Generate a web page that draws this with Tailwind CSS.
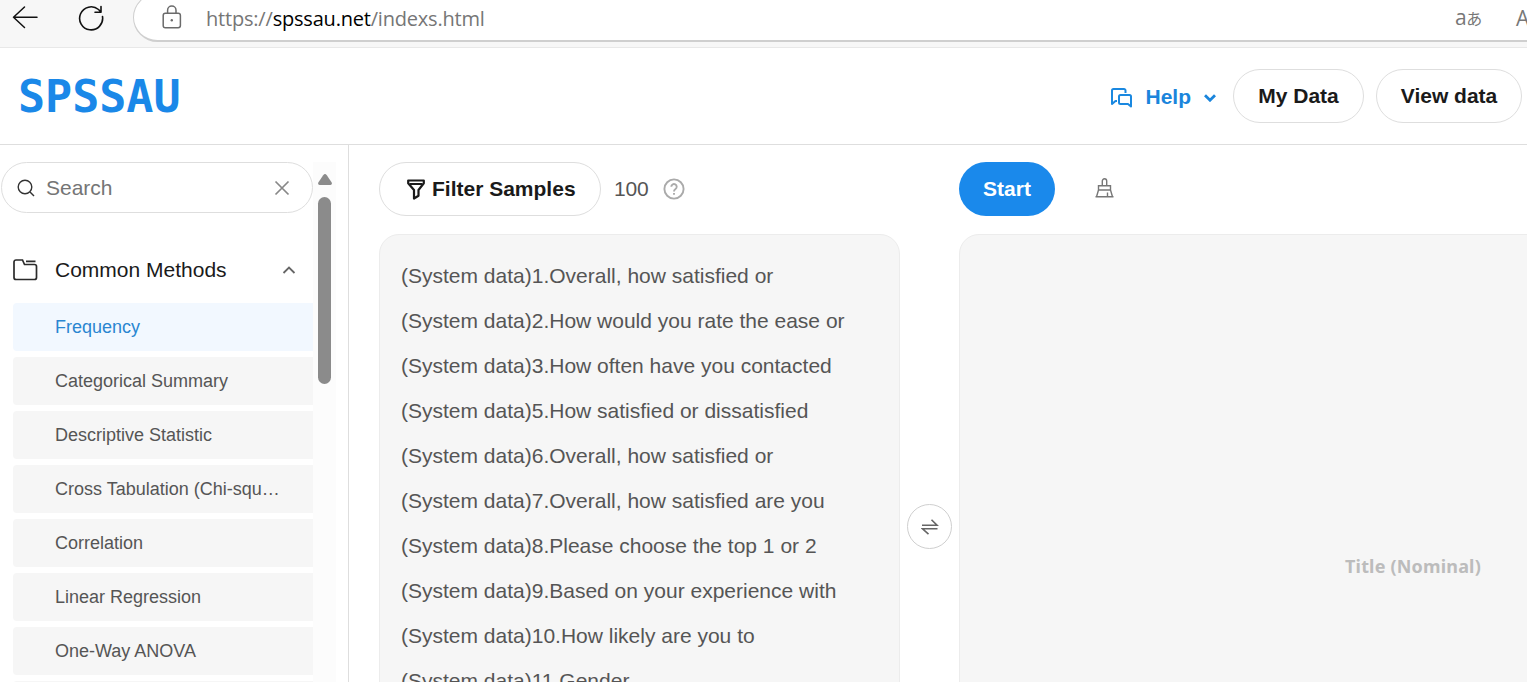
<!DOCTYPE html>
<html lang="en">
  <head>
    <meta charset="UTF-8" />
    <meta name="viewport" content="width=device-width, initial-scale=1.0" />
    <script src="https://cdn.jsdelivr.net/npm/@tailwindcss/browser@4"></script>
    <title>SPSSAU</title>
  </head>
  <body class="h-[682px] overflow-hidden bg-white font-['Liberation_Sans',Arial,sans-serif] text-[21px] text-[#1a1a1a] flex flex-col">
    <!-- Browser bar -->
    <div class="h-12 shrink-0 flex overflow-hidden bg-[#f7f7f7] border-b border-[#e8e8e8] font-['Open_Sans',sans-serif]">
      <div class="w-[133px] shrink-0 flex pl-3 pt-[5px]">
        <svg class="w-[26px] h-6" viewBox="0 0 26 24" fill="none" stroke="#111" stroke-width="1.5" stroke-linecap="round" stroke-linejoin="round">
          <path d="M25 12.3H1.5M12.5 2L1.5 12.3l11 10.2" />
        </svg>
        <svg class="w-[26px] h-[26px] ml-10" viewBox="0 0 26 26" fill="none" stroke="#111" stroke-width="1.6" stroke-linecap="round" stroke-linejoin="round">
          <path d="M24.5 11.5A11.5 11.5 0 1 1 20.5 4.5L23 7M23 1.5V7.3H17" />
        </svg>
      </div>
      <div class="h-[49px] -mt-[7px] w-[1420px] shrink-0 flex items-center bg-white border border-[#cfcfcf] border-b-2 rounded-l-full">
        <svg class="w-5 h-6 ml-[28px] shrink-0" viewBox="0 0 20 24" fill="none" stroke="#6b6b6b" stroke-width="1.5">
          <rect x="1.2" y="8.2" width="17.2" height="14.6" rx="2.2" />
          <path d="M5.6 8V5.3a4.2 4.2 0 0 1 8.4 0V8" />
          <circle cx="9.8" cy="15.2" r="1.2" fill="#6b6b6b" stroke="none" />
        </svg>
        <span class="ml-6 pt-[3px] w-[1249px] shrink-0 whitespace-nowrap text-[20px] tracking-[-0.2px] text-[#767676]">https://<span class="text-black">spssau.net</span>/indexs.html</span>
        <span class="w-[61px] shrink-0 whitespace-nowrap text-[21px] leading-6 text-[#777] tracking-[-0.5px]">a<span class="text-[16px] font-['Noto_Sans_CJK_JP',sans-serif]">あ</span></span>
        <span class="pt-[3px] text-[21px] text-[#777]">A</span>
      </div>
    </div>

    <!-- Header -->
    <header class="h-[97px] shrink-0 flex items-center justify-between pl-[18px] pr-[5px] border-b border-[#dedede]">
      <div class="pt-px font-['DejaVu_Sans_Mono',monospace] font-bold text-[45px] leading-none text-[#1a88e8]">SPSSAU</div>
      <div class="flex items-center font-bold">
        <svg class="w-[22px] h-5 mr-[13px] mt-[3px]" viewBox="0 0 22 20" fill="none" stroke="#1a88e0" stroke-width="2" stroke-linejoin="round">
          <path d="M15.5 5V2.5A1.5 1.500 0 0 0 14 1H3.500A1.500 1.500 0 0 0 2 2.500V16l3.500-3H7" />
          <path d="M10.500 7H19.500A1.500 1.500 0 0 1 21 8.500V18.500l-3-2.500h-7.500A1.500 1.500 0 0 1 9 14.500V8.500A1.500 1.500 0 0 1 10.500 7z" />
        </svg>
        <span class="pt-px text-[#1a85dc]">Help</span>
        <svg class="w-3 h-2 ml-[13px] mr-[17px] mt-[3px]" viewBox="0 0 12 8" fill="none" stroke="#1a85dc" stroke-width="2.8"><path d="M1 1.200l5 5 5-5" /></svg>
        <button class="w-[131px] h-[54px] mr-3 border border-[#dedede] rounded-full">My Data</button>
        <button class="w-[146px] h-[54px] border border-[#dedede] rounded-full">View data</button>
      </div>
    </header>

    <main class="flex-1 min-h-0 flex overflow-hidden">
      <!-- Methods -->
      <aside class="w-[349px] shrink-0 flex pt-[17px] border-r border-[#dedede] overflow-hidden">
        <div class="w-[313px] shrink-0">
          <div class="ml-px w-[312px] h-[51px] flex items-center pl-[15px] pr-[22px] border border-[#dedede] rounded-full">
            <svg class="w-[18px] h-[18px]" viewBox="0 0 18 18" fill="none" stroke="#333" stroke-width="1.4"><circle cx="8" cy="8" r="6.800" /><path d="M13 13l4 4" /></svg>
            <span class="ml-[11px] flex-1 text-[#757575]">Search</span>
            <svg class="w-4 h-4 mt-px" viewBox="0 0 16 16" stroke="#888" stroke-width="1.7"><path d="M1.500 1.500l13 13M14.500 1.500l-13 13" /></svg>
          </div>
          <div class="h-[90px] pt-[24px] pl-[13px] pr-[17px] flex items-center">
            <svg class="w-[25px] h-[22px]" viewBox="0 0 25 22" fill="none" stroke="#2b2b2b" stroke-width="1.700">
              <path d="M1 3a2 2 0 0 1 2-2h6.500l2 4.500H21.500a2 2 0 0 1 2 2V18.500a2 2 0 0 1-2 2H3a2 2 0 0 1-2-2zM13 2.400h9.500" />
            </svg>
            <span class="ml-[17px] flex-1">Common Methods</span>
            <svg class="w-[14px] h-2" viewBox="0 0 14 8" fill="none" stroke="#666" stroke-width="1.800"><path d="M1.500 7L7 1.500 12.500 7" /></svg>
          </div>
          <ul class="pl-[13px] flex flex-col gap-y-1.5 text-[18px] leading-[48px] text-[#555]">
            <li class="h-12 pl-[42px] rounded-l bg-[#f2f8ff] text-[#2a86d1]">Frequency</li>
            <li class="h-12 pl-[42px] rounded-l bg-[#f6f6f6]">Categorical Summary</li>
            <li class="h-12 pl-[42px] rounded-l bg-[#f6f6f6]">Descriptive Statistic</li>
            <li class="h-12 pl-[42px] rounded-l bg-[#f6f6f6]">Cross Tabulation (Chi-squ…</li>
            <li class="h-12 pl-[42px] rounded-l bg-[#f6f6f6]">Correlation</li>
            <li class="h-12 pl-[42px] rounded-l bg-[#f6f6f6]">Linear Regression</li>
            <li class="h-12 pl-[42px] rounded-l bg-[#f6f6f6]">One-Way ANOVA</li>
            <li class="h-12 pl-[42px] rounded-l bg-[#f6f6f6]"></li>
          </ul>
        </div>
        <!-- Scrollbar -->
        <div class="w-[23px] h-[520px] pt-[12px] bg-[#fcfcfc] flex flex-col items-center">
          <svg class="w-[14px] h-[11px]" viewBox="0 0 14 11" fill="#8b8b8b"><path d="M5.200 1.200Q7-1 8.800 1.200L13.700 8.500Q14.400 10.800 12.500 11H1.500Q-.4 10.800.3 8.500z" /></svg>
          <div class="mt-[12px] w-[13px] h-[187px] rounded-full bg-[#8b8b8b]"></div>
        </div>
      </aside>

      <!-- Variables -->
      <section class="w-[521px] shrink-0 ml-[30px] pt-[17px]">
        <div class="flex items-center">
          <button class="w-[222px] h-[54px] flex items-center pl-[27px] border border-[#dedede] rounded-full font-bold whitespace-nowrap">
            <svg class="w-[18px] h-[21px] mr-[7px]" viewBox="0 0 18 21" fill="none" stroke="#1a1a1a" stroke-width="2.200" stroke-linejoin="round">
              <path d="M1.200 1.500h15.600v2.700L11.500 11v5.700L7 19.500V11L1.200 4.200zM3 5h12" />
            </svg>
            Filter Samples
          </button>
          <span class="ml-[13px] tracking-[-0.2px] text-[#555]">100</span>
          <svg class="w-[22px] h-[22px] ml-[15px]" viewBox="0 0 22 22" fill="none" stroke="#aaa" stroke-width="1.900">
            <circle cx="11" cy="11" r="9.600" />
            <path d="M8.300 8.800a2.700 2.700 0 1 1 4.200 2.200c-1 .7-1.500 1.200-1.500 2.500M11 15v1.800" />
          </svg>
        </div>
        <ul class="mt-[18px] h-[520px] pl-[21px] pt-[18px] bg-[#f6f6f6] border border-[#ececec] rounded-[20px] leading-[45px] text-[#555] whitespace-nowrap">
          <li>(System data)1.Overall, how satisfied or</li>
          <li>(System data)2.How would you rate the ease or</li>
          <li>(System data)3.How often have you contacted</li>
          <li>(System data)5.How satisfied or dissatisfied</li>
          <li>(System data)6.Overall, how satisfied or</li>
          <li>(System data)7.Overall, how satisfied are you</li>
          <li>(System data)8.Please choose the top 1 or 2</li>
          <li>(System data)9.Based on your experience with</li>
          <li>(System data)10.How likely are you to</li>
          <li>(System data)11.Gender</li>
        </ul>
      </section>

      <div class="w-[59px] shrink-0 flex justify-center pt-[359px]">
        <button class="w-[45px] h-[45px] flex items-center justify-center border border-[#cfcfcf] rounded-full">
          <svg class="w-[18px] h-4" viewBox="0 0 18 16" fill="none" stroke="#666" stroke-width="1.600"><path d="M1 6.200h15L10.500.8M16.500 9.800H1.500l6 5.400" /></svg>
        </button>
      </div>

      <!-- Analysis -->
      <section class="w-[720px] shrink-0 pt-[17px]">
        <div class="flex items-center">
          <button class="w-24 h-[54px] rounded-full bg-[#1a89eb] text-white font-bold">Start</button>
          <svg class="w-[19px] h-5 ml-[40px] -mt-0.5" viewBox="0 0 19 20" fill="none" stroke="#777" stroke-width="1.400">
            <path d="M7.300 7.500V3a2.200 2.200 0 0 1 4.400 0v4.500M3.500 12V7.700h12V12zM3.500 12L1.500 18.800h16L15.500 12M.5 18.800h18M12.500 18.500v-4" />
          </svg>
        </div>
        <div class="mt-[18px] h-[520px] pl-[385px] pt-[317px] bg-[#f6f6f6] border border-[#ececec] rounded-[20px]">
          <span class="block font-['Noto_Sans',sans-serif] font-bold text-[18px] tracking-[0.18px] leading-[28px] text-[#bcbcbc]">Title (Nominal)</span>
        </div>
      </section>
    </main>
  </body>
</html>
